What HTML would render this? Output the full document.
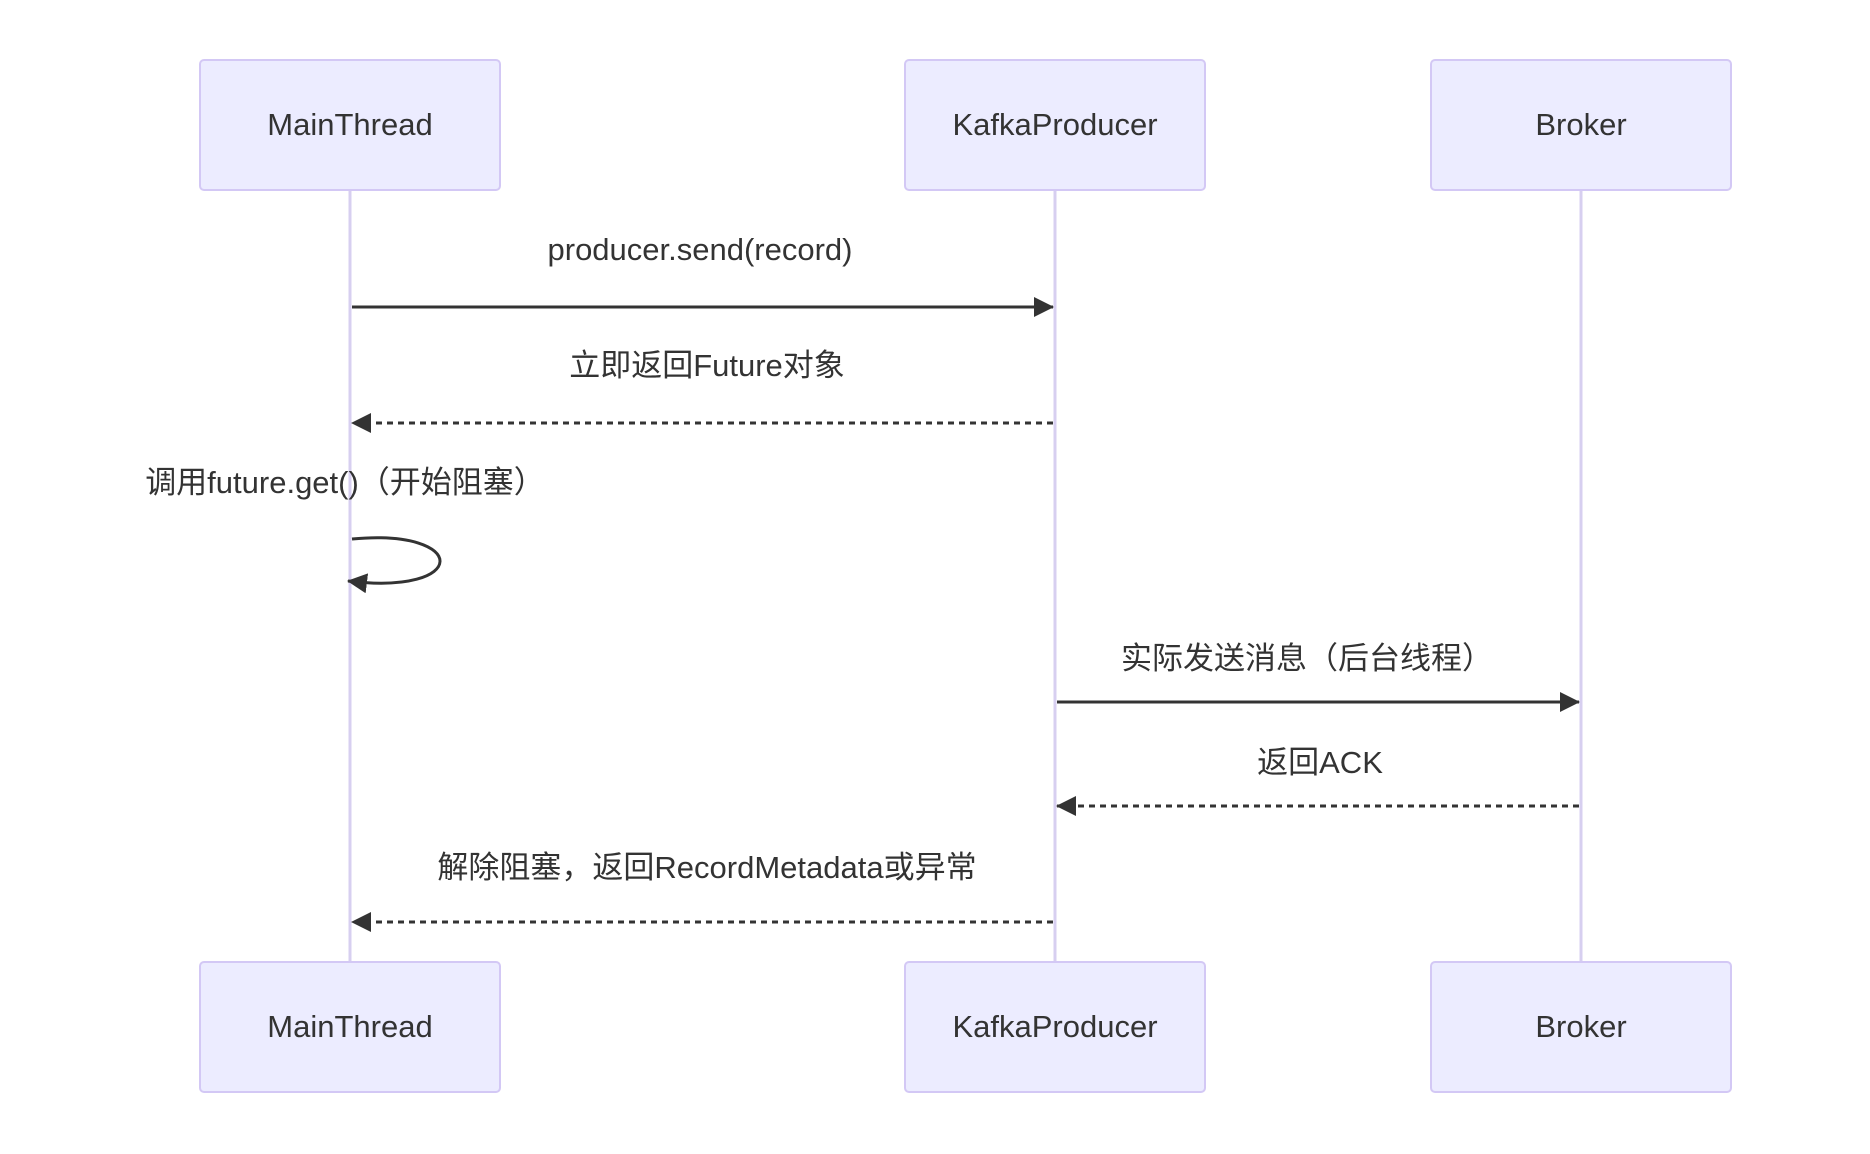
<!DOCTYPE html>
<html><head><meta charset="utf-8"><style>
html,body{margin:0;padding:0;background:#fff;width:1870px;height:1154px;overflow:hidden}
text{font-family:"Liberation Sans","Noto Sans CJK SC",sans-serif;font-size:31px;fill:#333;text-anchor:middle}
</style></head><body>
<svg width="1870" height="1154" viewBox="0 0 1870 1154" xmlns="http://www.w3.org/2000/svg">
<defs>
<marker id="b" markerWidth="20" markerHeight="20" refX="19" refY="10" orient="auto" markerUnits="userSpaceOnUse"><path d="M0,0 L20,10 L0,20 z" fill="#333"/></marker>
</defs>
<g stroke="#d7cff0" stroke-width="3">
<line x1="350" y1="191" x2="350" y2="963"/>
<line x1="1055" y1="191" x2="1055" y2="963"/>
<line x1="1581" y1="191" x2="1581" y2="963"/>
</g>
<g fill="#ececff" stroke="#d3c8f5" stroke-width="2">
<rect x="200" y="60" width="300" height="130" rx="4"/>
<rect x="905" y="60" width="300" height="130" rx="4"/>
<rect x="1431" y="60" width="300" height="130" rx="4"/>
<rect x="200" y="962" width="300" height="130" rx="4"/>
<rect x="905" y="962" width="300" height="130" rx="4"/>
<rect x="1431" y="962" width="300" height="130" rx="4"/>
</g>
<text x="350" y="135">MainThread</text>
<text x="1055" y="135">KafkaProducer</text>
<text x="1581" y="135">Broker</text>
<text x="350" y="1037">MainThread</text>
<text x="1055" y="1037">KafkaProducer</text>
<text x="1581" y="1037">Broker</text>
<g stroke="#333" stroke-width="3" fill="none">
<line x1="352" y1="307" x2="1053" y2="307" marker-end="url(#b)"/>
<line x1="1053" y1="423" x2="352" y2="423" stroke-dasharray="6,5" marker-end="url(#b)"/>
<path d="M352,539 C470,528 470,596 348,581" marker-end="url(#b)"/>
<line x1="1057" y1="702" x2="1579" y2="702" marker-end="url(#b)"/>
<line x1="1579" y1="806" x2="1057" y2="806" stroke-dasharray="6,5" marker-end="url(#b)"/>
<line x1="1053" y1="922" x2="352" y2="922" stroke-dasharray="6,5" marker-end="url(#b)"/>
</g>
<text x="700" y="260">producer.send(record)</text>
<text x="707" y="376">立即返回Future对象</text>
<text x="345" y="493">调用future.get()（开始阻塞）</text>
<text x="1307" y="669">实际发送消息（后台线程）</text>
<text x="1320" y="773">返回ACK</text>
<text x="707" y="878">解除阻塞，返回RecordMetadata或异常</text>
</svg>
</body></html>
